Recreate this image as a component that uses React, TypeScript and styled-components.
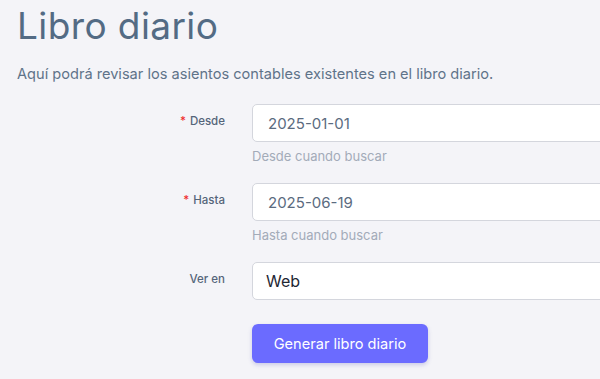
import styled, { createGlobalStyle } from 'styled-components';

const Global = createGlobalStyle`
  html, body {
    margin: 0;
    padding: 0;
    background: #f4f4f8;
    overflow: hidden;
  }
  body {
    font-family: Inter, "Noto Sans", "Liberation Sans", sans-serif;
  }
`;

const Page = styled.main`
  padding: 3px 0 0 17px;
  width: 600px;
  height: 379px;
  box-sizing: border-box;
`;

const Title = styled.h1`
  margin: 0;
  font-size: 37px;
  line-height: 46px;
  font-weight: 400;
  color: #536b84;
  letter-spacing: 0.4px;
`;

const Lead = styled.p`
  margin: 15px 0 0;
  font-size: 14.6px;
  line-height: 20px;
  color: #5f7389;
`;

const Form = styled.form`
  margin-top: 20px;
  display: flex;
  flex-direction: column;
`;

const Row = styled.div<{ $gap: number }>`
  display: grid;
  grid-template-columns: 208px 360px;
  column-gap: 27px;
  margin-bottom: ${(p) => p.$gap}px;
`;

const Label = styled.label`
  justify-self: end;
  padding-top: 10px;
  font-size: 11.5px;
  line-height: 14px;
  font-weight: 500;
  color: #55657a;
`;

const Req = styled.span`
  color: #ef2b2b;
  margin-right: 4px;
`;

const Field = styled.div`
  display: flex;
  flex-direction: column;
`;

const Input = styled.div<{ $dark?: boolean }>`
  height: 38px;
  box-sizing: border-box;
  border: 1px solid #d4d6dd;
  border-radius: 5px;
  background: #fff;
  display: flex;
  align-items: center;
  padding-left: ${(p) => (p.$dark ? 13 : 15)}px;
  font-size: ${(p) => (p.$dark ? 16 : 15)}px;
  color: ${(p) => (p.$dark ? '#1f2733' : '#5b6b7f')};
`;

const Help = styled.span`
  margin-top: 6px;
  font-size: 13px;
  line-height: 16px;
  color: #a3abb8;
`;

const Button = styled.button`
  margin-left: 235px;
  width: 176px;
  height: 39px;
  border: none;
  border-radius: 6px;
  background: #6b6bff;
  color: #fff;
  font-family: inherit;
  font-size: 14.6px;
  box-shadow: 0 2px 4px rgba(80, 80, 180, 0.25);
`;

export default function App() {
  return (
    <>
      <Global />
      <Page>
        <Title>Libro diario</Title>
        <Lead>Aquí podrá revisar los asientos contables existentes en el libro diario.</Lead>
        <Form>
          <Row $gap={19}>
            <Label><Req>*</Req>Desde</Label>
            <Field>
              <Input>2025-01-01</Input>
              <Help>Desde cuando buscar</Help>
            </Field>
          </Row>
          <Row $gap={19}>
            <Label><Req>*</Req>Hasta</Label>
            <Field>
              <Input>2025-06-19</Input>
              <Help>Hasta cuando buscar</Help>
            </Field>
          </Row>
          <Row $gap={24}>
            <Label>Ver en</Label>
            <Field>
              <Input $dark>Web</Input>
            </Field>
          </Row>
          <Button type="button">Generar libro diario</Button>
        </Form>
      </Page>
    </>
  );
}
